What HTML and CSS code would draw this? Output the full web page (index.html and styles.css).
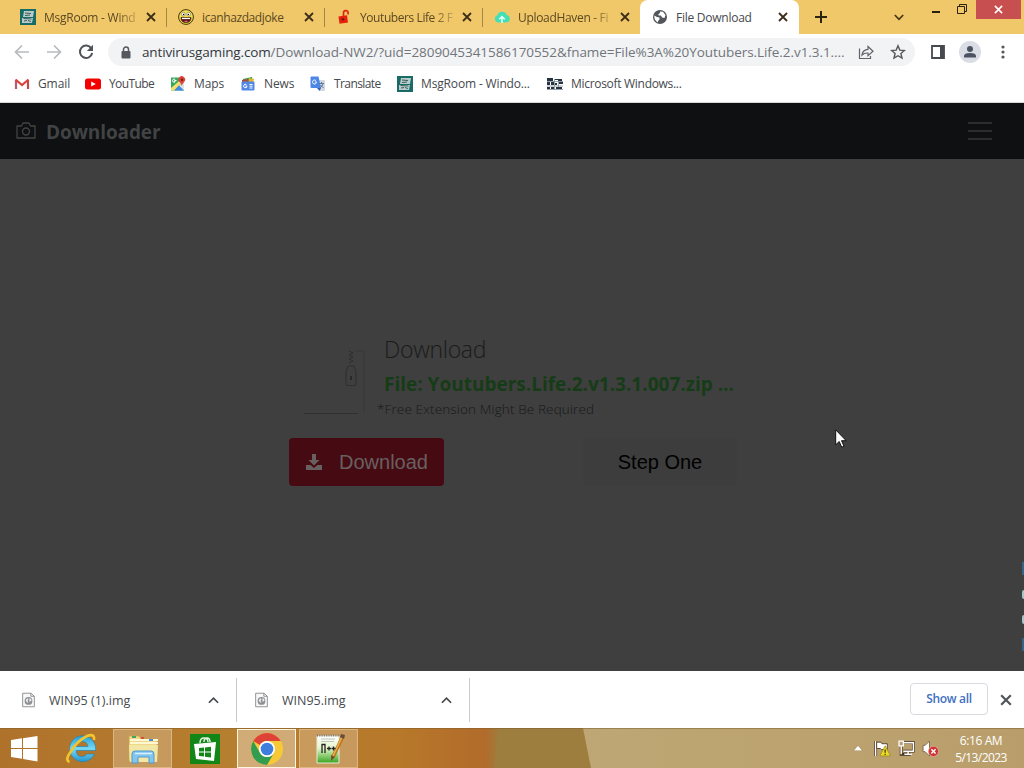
FILE: index.html
```html
<!DOCTYPE html>
<html lang="en">
<head>
  <meta charset="UTF-8">
  <meta name="viewport" content="width=device-width, initial-scale=1">
  <title>File Download</title>
  <link rel="stylesheet" href="styles.css">
</head>
<body>
  <svg class="defs" width="0" height="0">
    <symbol id="x" viewBox="0 0 10 10"><path d="M1 1l8 8M9 1L1 9" fill="none" stroke="currentColor" stroke-width="1.8"/></symbol>
    <symbol id="up" viewBox="0 0 12 8"><path d="M1 7l5-5 5 5" fill="none" stroke="currentColor" stroke-width="1.9"/></symbol>
    <symbol id="room" viewBox="0 0 16 16">
      <path fill="#176c68" d="M0 0h16v16H0z"/>
      <path fill="#b9cbc9" d="M4 2h10l-1 6H3zM2 9h11l-1 5H2z"/>
      <path d="M5 4l6 .5M5 6.500l5-.5M3.500 9.500l8 .5M4 12l3-.5M8 11.500l3 1" stroke="#3b5f60"/>
    </symbol>
    <symbol id="file" viewBox="0 0 14 16">
      <path d="M.7.7h9L13.300 4v11.300H.7z" fill="#f8f8f8" stroke="#8c8c90"/>
      <path d="M9.500.7V4h3.800" fill="none" stroke="#8c8c90"/>
      <circle cx="7" cy="9" r="4.200" fill="#8d8f94"/>
      <path d="M4 8l2-2 1 1-1 2 1 2-2-.500zM8 6l2 1v2l-2 1z" fill="#eee"/>
    </symbol>
  </svg>

  <div class="tabs">
    <div class="tab">
      <svg class="fav" viewBox="0 0 16 16"><use href="#room"/></svg>
      <span class="title fade">MsgRoom - Wind</span>
      <svg class="close"><use href="#x"/></svg>
    </div>
    <div class="tab">
      <svg class="fav" viewBox="0 0 16 16">
        <circle cx="8" cy="8" r="7.400" fill="#f6df45" stroke="#3d3312"/>
        <path d="M3 8.500h10q0 5-5 5t-5-5z" fill="#6b1020" stroke="#2c1c10" stroke-width=".7"/>
        <path d="M4 8.800h8v1.300H4z" fill="#fff"/>
        <path d="M6 12.200q2-1 4 0-2 1.500-4 0z" fill="#e58a96"/>
        <circle cx="5.300" cy="5.200" r="1.900" fill="#fff" stroke="#555" stroke-width=".5"/><circle cx="10.700" cy="5.200" r="1.900" fill="#fff" stroke="#555" stroke-width=".5"/>
        <circle cx="5.600" cy="5.500" r=".7"/><circle cx="10.400" cy="5.500" r=".7"/>
      </svg>
      <span class="title joke">icanhazdadjoke</span>
      <svg class="close"><use href="#x"/></svg>
    </div>
    <div class="tab">
      <svg class="fav" viewBox="0 0 16 16">
        <path d="M7.500 7V4.200a2.300 2.300 0 0 1 4.600-.4v1.700" fill="none" stroke="#df2912" stroke-width="1.700"/>
        <path d="M2.500 7.500L11 6.300l1 7.200-8.500 1.300z" fill="#e5200d"/>
        <circle cx="7" cy="10.300" r="1.300" fill="#75180b"/>
      </svg>
      <span class="title fade tube">Youtubers Life 2 F</span>
      <svg class="close"><use href="#x"/></svg>
    </div>
    <div class="tab last">
      <svg class="fav" viewBox="0 0 16 16">
        <path d="M4 13.500a3.700 3.700 0 0 1-.5-7.200A4.800 4.800 0 0 1 12.700 6a3.800 3.800 0 0 1-.2 7.500z" fill="#43dfb5"/>
        <path d="M8 14V8M5.300 10.300L8 7.600l2.700 2.700" fill="none" stroke="#e7fff5" stroke-width="1.600"/>
      </svg>
      <span class="title fade haven">UploadHaven - Fi</span>
      <svg class="close"><use href="#x"/></svg>
    </div>
    <div class="tab active">
      <svg class="fav globe" viewBox="0 0 16 16">
        <circle cx="8" cy="8" r="7" fill="#52565a"/>
        <path d="M2.300 6.500L5 8l2.500.5v2L6 12v1.500Q2 11.500 2.300 6.500zM8 2.500l3 .3L13.500 6l-1 3-2.500-.5L9 6.500H6.500V5L8 4z" fill="#fff"/>
      </svg>
      <span class="title">File Download</span>
      <svg class="close"><use href="#x"/></svg>
    </div>
    <svg class="plus" viewBox="0 0 12 12"><path d="M6 0v12M0 6h12" stroke="#2c2410" stroke-width="2"/></svg>
    <svg class="tab-search" viewBox="0 0 10 7"><path d="M.8 1L5 5.300 9.200 1" fill="none" stroke="#443718" stroke-width="1.700"/></svg>
    <div class="window-buttons">
      <svg class="min" viewBox="0 0 8 2"><path d="M0 0h8v2H0z" fill="#2a210f"/></svg>
      <svg class="max" viewBox="0 0 10 10"><path d="M.5 2.500h7v7h-7zM2.500 2.500v-2h7v7h-2" fill="none" stroke="#2a210f"/></svg>
      <div class="quit"><svg viewBox="0 0 10 10"><path d="M1 1l8 8M9 1L1 9" stroke="#fff" stroke-width="1.700"/></svg></div>
    </div>
  </div>

  <div class="toolbar">
    <svg class="nav" viewBox="0 0 16 16"><path d="M15 8H2M8 1.500L1.500 8 8 14.500" fill="none" stroke="#b9babd" stroke-width="1.700"/></svg>
    <svg class="nav" viewBox="0 0 16 16"><path d="M1 8h13M8 1.500L14.500 8 8 14.500" fill="none" stroke="#b9babd" stroke-width="1.700"/></svg>
    <svg class="nav" viewBox="0 0 16 16"><path d="M13.300 4.300A6.200 6.200 0 1 0 14.200 9" fill="none" stroke="#505357" stroke-width="2"/><path d="M15 .8v6.200H8.800z" fill="#505357"/></svg>
    <div class="omnibox">
      <svg class="lock" viewBox="0 0 10 13"><path d="M2.500 6V3.500a2.500 2.500 0 0 1 5 0V6" fill="none" stroke="#55585c" stroke-width="1.500"/><rect x=".5" y="5" width="9" height="7.500" rx="1" fill="#55585c"/></svg>
      <span class="url"><b>antivirusgaming.com</b>/Download-NW2/?uid=2809045341586170552&amp;fname=File%3A%20Youtubers.Life.2.v1.3.1....</span>
      <svg class="share" viewBox="0 0 16 16"><path d="M1.500 4.500v10h11v-2.500M4 11c.5-4 2.500-5.500 6-5.700V2.500l5 4.700-5 4.500V9Q6 8.800 4 11z" fill="none" stroke="#606368" stroke-width="1.200"/></svg>
      <svg class="star" viewBox="0 0 16 16"><path d="M8 1.800l1.800 4.300 4.600.4-3.500 3 1.100 4.600L8 11.700l-4 2.400 1.100-4.600-3.500-3 4.600-.4z" fill="none" stroke="#55585c" stroke-width="1.400"/></svg>
    </div>
    <svg class="panel" viewBox="0 0 14 14"><path d="M1 1h12v12H1z" fill="none" stroke="#46494d" stroke-width="1.800"/><path d="M9 1h4v12H9z" fill="#46494d"/></svg>
    <svg class="avatar" viewBox="0 0 22 22"><circle cx="11" cy="11" r="11" fill="#dadde5"/><circle cx="11" cy="8" r="3" fill="#4b5362"/><path d="M5 16.500V15q0-3 6-3t6 3v1.500z" fill="#4b5362"/></svg>
    <svg class="dots" viewBox="0 0 4 14"><g fill="#55585c"><circle cx="2" cy="2" r="1.600"/><circle cx="2" cy="7" r="1.600"/><circle cx="2" cy="12" r="1.600"/></g></svg>
  </div>

  <div class="bookmarks">
    <div class="bookmark gmail">
      <svg viewBox="0 0 16 16"><path d="M2 13V4" stroke="#b45b75" stroke-width="2.200"/><path d="M14 13V4" stroke="#c5474c" stroke-width="2.200"/><path d="M1.500 3.500L8 9l6.500-5.500" fill="none" stroke="#dc4239" stroke-width="2.200"/></svg>
      <span>Gmail</span>
    </div>
    <div class="bookmark youtube">
      <svg viewBox="0 0 16 16"><rect y="2.500" width="16" height="11" rx="2.500" fill="#f40000"/><path d="M6.200 5.500v5L10.800 8z" fill="#fff"/></svg>
      <span>YouTube</span>
    </div>
    <div class="bookmark maps">
      <svg viewBox="0 0 16 16"><path d="M1 1.500h13v13H1z" fill="#35a85a"/><path d="M1 12L12 2.500l2 2L4 14.500H1z" fill="#f6dc75"/><path d="M4.500 14.500L9 9.500l5 5z" fill="#4286e8"/><path d="M9 9.500l5-4v9z" fill="#dbe3e6"/><path d="M11.800 10q-.5-2.500-2.200-4A3.300 3.300 0 1 1 14.500 5.500q-2 2-2.700 4.500z" fill="#db4437"/><circle cx="12" cy="3.700" r="1.200" fill="#7d1e17"/><path d="M6.500 4.500H4.400v1.200h.9A1.600 1.600 0 1 1 5.200 3.500" fill="none" stroke="#fff"/></svg>
      <span>Maps</span>
    </div>
    <div class="bookmark news">
      <svg viewBox="0 0 16 16"><path d="M3 3l9-2 1 5H3z" fill="#3e9a4b"/><path d="M9 2l5 1-1 4H8z" fill="#e0b42f"/><path d="M2 4l6-1 1 3H2z" fill="#a3523d"/><rect x="1.500" y="5.500" width="13" height="9" rx="1" fill="#5287e6"/><path d="M7 10H5.500M7 10A1.700 1.700 0 1 1 6.500 8.800M9.500 8.500h3M9.500 10.200h3M9.500 12h3" fill="none" stroke="#fff"/></svg>
      <span>News</span>
    </div>
    <div class="bookmark translate">
      <svg viewBox="0 0 16 16"><path d="M6 4h8q1 0 1 1v9q0 1-1 1h-4z" fill="#d4d7df"/><path d="M1.500.5h7L11 12H1.500q-1 0-1-1v-9.500q0-1 1-1z" fill="#4c87e8"/><path d="M6.500 6H4.800m1.700 0A2 2 0 1 1 6 4.700" fill="none" stroke="#fff"/><path d="M9 7.500h5M11.500 6v1.500M13 7.500q-.7 3-3 4.500M10.500 9l3 3" fill="none" stroke="#5b789d"/><path d="M7 12h4l-1.500 3z" fill="#3160b5"/></svg>
      <span>Translate</span>
    </div>
    <div class="bookmark room">
      <svg viewBox="0 0 16 16"><use href="#room"/></svg>
      <span>MsgRoom - Windo...</span>
    </div>
    <div class="bookmark microsoft">
      <svg viewBox="0 0 16 16"><path fill="#26323f" d="M0 2h6v3H0zM0 6h3v3H0zM4 6h3v3H4zM0 11h3v2H0zM4 11h3v2H4zM8 3h3v1H8zM11 3h4v2h-4zM8 7h2v2H8zM12 6h4v2h-4zM9 11h6v2H9z"/><path d="M7.500 3v11M0 5.500h16M0 10h16M11.500 5v6M0 13.500h16" stroke="#7d8d98" stroke-width=".8"/></svg>
      <span>Microsoft Windows...</span>
    </div>
  </div>

  <div class="page">
    <div class="navbar">
      <svg class="camera" viewBox="0 0 20 18"><path d="M1 4h4.500L7 1h6l1.500 3H19v12H1z" fill="none" stroke="#414345" stroke-width="1.300" stroke-linejoin="round"/><circle cx="10" cy="9.500" r="3.500" fill="none" stroke="#414345" stroke-width="1.400"/></svg>
      <span class="brand">Downloader</span>
      <div class="burger"><i></i><i></i><i></i></div>
    </div>
    <div class="content">
      <div class="card">
        <div class="info">
          <svg class="zip" viewBox="0 0 66 82"><path d="M2 79.500h54" stroke="#303030"/><path d="M62 79V17h-9" fill="none" stroke="#393939"/><path d="M47 17l4 2-4 2 4 2-4 2 4 2-4 2M44 50V38l2-6h6l2 6v12q0 1.500-2 1.500h-6q-2 0-2-1.500z" fill="none" stroke="#2e2e2e"/><path d="M49 42v4" stroke="#292929" stroke-width="2"/></svg>
          <div class="texts">
            <h1>Download</h1>
            <h2>File: Youtubers.Life.2.v1.3.1.007.zip ...</h2>
            <p>*Free Extension Might Be Required</p>
          </div>
        </div>
        <div class="actions">
          <button class="download">
            <svg viewBox="0 0 16 16"><path d="M6 0h4v6h3.500L8 11.500 2.500 6H6z" fill="#686060"/><path d="M0 11h4.500L8 14l3.500-3H16v5H0z" fill="#686060"/></svg>
            <span>Download</span>
          </button>
          <button class="step">Step One</button>
        </div>
      </div>
    </div>
    <div class="watermark"><i class="bar"></i><i class="dot"></i><i class="dot"></i><i class="bar"></i></div>
  </div>

  <div class="shelf">
    <div class="item">
      <svg class="file"><use href="#file"/></svg>
      <span class="first">WIN95 (1).img</span>
      <svg class="up"><use href="#up"/></svg>
    </div>
    <div class="item">
      <svg class="file"><use href="#file"/></svg>
      <span>WIN95.img</span>
      <svg class="up"><use href="#up"/></svg>
    </div>
    <button class="show-all">Show all</button>
    <svg class="shelf-close"><use href="#x"/></svg>
  </div>

  <div class="taskbar">
    <svg class="wallpaper" viewBox="0 0 1024 40" preserveAspectRatio="none">
      <defs>
        <linearGradient id="wood"><stop offset="0" stop-color="#af722b"/><stop offset=".5" stop-color="#b78030"/><stop offset=".8" stop-color="#b7782a"/><stop offset=".97" stop-color="#b26b2b"/><stop offset="1" stop-color="#9e7e3e"/></linearGradient>
        <linearGradient id="sand"><stop offset="0" stop-color="#bea774"/><stop offset="1" stop-color="#b99e6b"/></linearGradient>
      </defs>
      <path d="M0 0h500l-4 40H0z" fill="url(#wood)"/>
      <path d="M498 0h86l8 40H494z" fill="#9e7e3e"/>
      <path d="M583 0h441v40H591z" fill="url(#sand)"/>
      <path d="M0 .5h1024" stroke="#7b5b2c" stroke-opacity=".5"/>
    </svg>
    <div class="task start"><svg viewBox="0 0 28 28"><path d="M1 5l11-1.700V13H1zM13 3.200L27.500 1v12H13zM1 14h11v9.700L1 22zM13 14h14.500v12.500L13 24z" fill="#fff"/></svg></div>
    <div class="task ie">
      <svg viewBox="0 0 32 32">
        <defs><linearGradient id="ieg" x2="0" y2="1"><stop stop-color="#239ed4"/><stop offset=".5" stop-color="#77daf3"/><stop offset="1" stop-color="#2495cc"/></linearGradient></defs>
        <path d="M29.500 21A13 13 0 1 1 30.500 17.500H11q.5 6 6 6 3.500 0 4.500-2.500zM11 13.500h12q-.5-5-6-5t-6 5z" fill="url(#ieg)" stroke="#2180b5" stroke-width=".6" fill-rule="evenodd"/>
        <path d="M4.500 29q-5-2 1-10Q12 8 22 3q8-3 7 4" fill="none" stroke="#f2c52e" stroke-width="2.600"/>
      </svg>
    </div>
    <div class="task open explorer">
      <svg viewBox="0 0 32 32"><path d="M2 3h10l2 3h16v22H2z" fill="#efd889" stroke="#c9a752" stroke-width=".7"/><path d="M3 7h28M3 10h28" stroke="#fff8d3" stroke-width="2"/><path d="M5 4h4" stroke="#42a65b" stroke-width="2"/><path d="M14 5h3" stroke="#d9503a" stroke-width="2"/><path d="M22 7h4" stroke="#4a8ed2" stroke-width="2"/><path d="M2 12h29l-1 17H3z" fill="#f3e7a5"/><path d="M5 30V21q0-3 3-3h16q3 0 3 3v9h-5v-6H11v6z" fill="#83c5ed" stroke="#5099cf"/><path d="M8 20.500h17" stroke="#d6f1fc" stroke-width="1.500"/></svg>
    </div>
    <div class="task store">
      <svg viewBox="0 0 30 30"><path d="M0 0h30v30H0z" fill="#138618"/><path d="M4 10l22-2-2 19-18-2z" fill="#fff"/><path d="M10 9q0-5 4-5t4 4M14 8q0-4 3-4t3 4" fill="none" stroke="#e9f6e8" stroke-width="1.400"/><path d="M9 14l5-.5v4H9zM15 13.400l6-.6v4.700h-6zM9 18.500h5v4l-5-.6zM15 18.500h6v5l-6-.7z" fill="#138618"/></svg>
    </div>
    <div class="task open chrome">
      <svg viewBox="0 0 32 32"><circle cx="16" cy="16" r="16" fill="#f7c936"/><path d="M2.200 8A16 16 0 0 1 29.800 8H16a8 8 0 0 0-7 4z" fill="#df4236"/><path d="M2.200 8A16 16 0 0 0 16 32l7-12a8 8 0 0 1-13.900 0z" fill="#329c50"/><circle cx="16" cy="16" r="8" fill="#fff"/><circle cx="16" cy="16" r="6.300" fill="#3f7edc"/></svg>
    </div>
    <div class="task open notepad">
      <svg viewBox="0 0 32 32"><defs><linearGradient id="np" x2="0" y2="1"><stop stop-color="#fff"/><stop offset=".45" stop-color="#e3f5c9"/><stop offset="1" stop-color="#37a51e"/></linearGradient></defs><path d="M4 3h22v27H4z" fill="url(#np)" stroke="#e5eadc"/><path d="M4 2.500h22" stroke="#777" stroke-width="2" stroke-dasharray="1 1.300"/><path d="M8 6h14M8 8.500h13" stroke="#bdc4bb"/><path d="M30 3L20 24" stroke="#b87421" stroke-width="3.600"/><path d="M29 4L20 23" stroke="#ecad48" stroke-width="1.700"/><path d="M18 22l4 2-4 4z" fill="#705130"/><path d="M28 1l4 1-1 4-4-2z" fill="#6b4a3c"/><path d="M9 20v-8.500h3V20M14 15.500h4M16 13.500v4M18.500 15.500h4M20.500 13.500v4" fill="none" stroke="#222" stroke-width="1.300"/></svg>
    </div>
    <div class="tray">
      <svg class="more" viewBox="0 0 10 6"><path d="M.5 5.700L5 .5l4.500 5.200z" fill="#fff" stroke="#8a7252" stroke-width=".4"/></svg>
      <svg class="tray-icon" viewBox="0 0 16 16"><path d="M1.500 1v14" stroke="#4a3520" stroke-width="2.800"/><path d="M1.500 1v14" stroke="#fff" stroke-width="1.400"/><path d="M2.500 2h4l1 1.500h5V9H7L6 8H2.500z" fill="#fff" stroke="#4a3520" stroke-width=".8"/><path d="M10.500 5.500L15.500 15h-10z" fill="#eddc24" stroke="#9b871c" stroke-width=".7"/><path d="M10.500 9v3M10.500 13v1" stroke="#423a10" stroke-width="1.200"/></svg>
      <svg class="tray-icon" viewBox="0 0 16 16"><g fill="none" stroke="#4a3520" stroke-width="2.700"><path d="M5 2.500h9.500v8H5M3 5v8.500h9M9.500 10v3"/></g><path d="M5 2.500h9.500v8H5" fill="none" stroke="#fff" stroke-width="1.400"/><path d="M3 5v8.500M6 13.500h7M9.500 10.500v3" fill="none" stroke="#fff" stroke-width="1.400"/><path d="M1 1h4v4.500H1z" fill="#b69c70" stroke="#fff" stroke-width="1.200"/></svg>
      <svg class="tray-icon" viewBox="0 0 16 16"><path d="M1 5h2l4-4v14l-4-4H1z" fill="#fff" stroke="#725c43" stroke-width=".8"/><circle cx="10.800" cy="10.700" r="4.800" fill="#cd3533" stroke="#ecaaa0" stroke-width=".7"/><path d="M8.800 8.700l4 4M12.800 8.700l-4 4" stroke="#fff" stroke-width="1.400"/></svg>
      <div class="clock"><span class="time">6:16 AM</span><span>5/13/2023</span></div>
    </div>
  </div>

  <svg class="cursor" viewBox="0 0 12 19"><path d="M.7.8v15l3.500-3.300 2.500 5.700 2.300-1-2.500-5.500h4.700z" fill="#fff" stroke="#111"/></svg>
</body>
</html>
```
FILE: styles.css
```css
* {
  box-sizing: border-box;
}

body {
  margin: 0;
  width: 1024px;
  height: 768px;
  overflow: hidden;
  position: relative;
  display: flex;
  flex-direction: column;
  font-family: "Open Sans", "Noto Sans", sans-serif;
  font-size: 12px;
  color: #46494d;
  background: #fff;
}

svg {
  display: block;
  flex: none;
}

span, h1, h2, p {
  white-space: nowrap;
}

button {
  font-family: inherit;
  border: none;
  padding: 0;
}

.defs {
  position: absolute;
}

/* tab strip */
.tabs {
  height: 34px;
  flex: none;
  display: flex;
  align-items: center;
  padding-left: 8px;
  background: #f0c869;
}

.tab {
  width: 158px;
  height: 34px;
  display: flex;
  align-items: center;
  padding: 0 10px 0 12px;
  color: #5c4923;
}

.tab + .tab {
  background: linear-gradient(#a38546, #a38546) left center / 1px 19px no-repeat;
}

.tab + .tab.active {
  width: 159px;
  background: #fff;
  border-radius: 8px 8px 0 0;
  color: #46494d;
}

.fav {
  width: 16px;
  height: 16px;
  margin-right: 8px;
}

.title {
  width: 94px;
  letter-spacing: -0.25px;
}

.title.joke {
  letter-spacing: -0.4px;
}

.title.tube {
  letter-spacing: -0.42px;
}

.title.haven {
  letter-spacing: -0.32px;
}

.fade {
  -webkit-mask-image: linear-gradient(90deg, #000 78%, rgba(0, 0, 0, 0.2));
  mask-image: linear-gradient(90deg, #000 78%, rgba(0, 0, 0, 0.2));
}

.close {
  width: 10px;
  height: 10px;
  margin-left: 8px;
  color: #3b2d17;
}

.plus {
  width: 12px;
  height: 12px;
  margin-left: 16px;
}

.tab-search {
  width: 10px;
  height: 7px;
  margin-left: 67px;
}

.window-buttons {
  height: 34px;
  display: flex;
  align-items: flex-start;
  margin-left: 28px;
}

.min {
  width: 8px;
  height: 2px;
  margin-top: 11px;
}

.max {
  width: 10px;
  height: 10px;
  margin: 4px 9px 0 17px;
}

.quit {
  width: 45px;
  height: 19px;
  display: flex;
  align-items: center;
  justify-content: center;
  background: #c84f50;
}

.quit svg {
  width: 9px;
  height: 9px;
}

/* toolbar */
.toolbar {
  height: 36px;
  flex: none;
  display: flex;
  align-items: center;
  padding-left: 14px;
}

.nav {
  width: 16px;
  height: 16px;
  margin-right: 16px;
}

.omnibox {
  width: 807px;
  height: 28px;
  margin-left: -2px;
  display: flex;
  align-items: center;
  padding-left: 13px;
  border-radius: 14px;
  background: #f1f3f5;
}

.lock {
  width: 10px;
  height: 13px;
}

.url {
  width: 704px;
  margin-left: 11px;
  font-size: 13.5px;
  letter-spacing: -0.06px;
  color: #72757a;
}

.url b {
  font-weight: 400;
  letter-spacing: -0.15px;
  color: #35383c;
}

.share {
  width: 16px;
  height: 16px;
  margin-left: 12px;
}

.star {
  width: 16px;
  height: 16px;
  margin-left: 16px;
}

.panel {
  width: 14px;
  height: 14px;
  margin-left: 16px;
}

.avatar {
  width: 22px;
  height: 22px;
  margin-left: 14px;
}

.dots {
  width: 4px;
  height: 14px;
  margin-left: 20px;
}

/* bookmarks bar */
.bookmarks {
  height: 33px;
  flex: none;
  display: flex;
  padding: 0 0 5px 14px;
  border-bottom: 1px solid #d7d7d9;
}

.bookmark {
  display: flex;
  align-items: center;
  gap: 8px;
  letter-spacing: -0.1px;
}

.bookmark svg {
  width: 16px;
  height: 16px;
}

.gmail { width: 71px; }
.youtube { width: 85px; letter-spacing: -0.6px; }
.maps { width: 70px; }
.news { width: 70px; }
.translate { width: 87px; letter-spacing: -0.6px; }
.room { width: 150px; letter-spacing: -0.15px; }
.microsoft { letter-spacing: -0.3px; }

.page {
  height: 568px;
  flex: none;
  position: relative;
  display: flex;
  flex-direction: column;
  background: #3f3f3f;
}

.navbar {
  height: 56px;
  flex: none;
  display: flex;
  align-items: center;
  padding: 0 32px 0 16px;
  background: #0e1011;
}

.camera {
  width: 20px;
  height: 18px;
}

.brand {
  margin-left: 10px;
  padding-top: 2px;
  font-size: 19px;
  font-weight: 700;
  letter-spacing: -0.1px;
  color: #414345;
}

.burger {
  width: 24px;
  margin-left: auto;
  display: flex;
  flex-direction: column;
  gap: 6px;
}

.burger i {
  height: 2px;
  background: #2c2d2e;
}

.content {
  padding: 175px 0 0 289px;
}

.card {
  width: 448px;
}

.info {
  display: flex;
  height: 104px;
}

.zip {
  width: 66px;
  height: 82px;
  margin-left: 13px;
}

.texts {
  padding-left: 16px;
}

h1 {
  margin: 0;
  font-size: 23px;
  line-height: 30px;
  font-weight: 300;
  letter-spacing: -0.3px;
  color: #1b1b1b;
}

h2 {
  margin: 8px 0 0;
  font-size: 19px;
  line-height: 24px;
  font-weight: 700;
  color: #163c17;
}

p {
  margin: 4px 0 0 -7px;
  font-size: 13.5px;
  line-height: 18px;
  font-weight: 300;
  letter-spacing: 0.13px;
  color: #181818;
}

.actions {
  display: flex;
  justify-content: space-between;
}

.download {
  width: 155px;
  height: 48px;
  display: flex;
  align-items: center;
  padding-left: 17px;
  border-radius: 4px;
  background: #460a12;
  font-family: "Liberation Sans", Arial, sans-serif;
  font-size: 20px;
  color: #686060;
}

.download svg {
  width: 16px;
  height: 16px;
  margin-right: 17px;
}

.step {
  width: 154px;
  height: 48px;
  border-radius: 4px;
  background: #3d3d3d;
  font-family: "Liberation Sans", Arial, sans-serif;
  font-size: 20px;
  color: #000;
}

.watermark {
  position: absolute;
  right: 0;
  top: 459px;
  width: 2px;
  display: flex;
  flex-direction: column;
  gap: 13px;
}

.watermark i {
  height: 13px;
  background: #356487;
}

.watermark .dot {
  height: 9px;
  margin-top: 2px;
  margin-bottom: 1px;
  border-radius: 4px 0 0 4px;
  background: #a5c5c8;
}

/* downloads shelf */
.shelf {
  height: 57px;
  flex: none;
  display: flex;
  align-items: center;
  background: #fff;
}

.item {
  height: 44px;
  width: 237px;
  display: flex;
  align-items: center;
  padding: 0 17px 0 22px;
  border-right: 1px solid #c9cacc;
}

.item + .item {
  width: 233px;
  padding-left: 18px;
}

.file {
  width: 13px;
  height: 16px;
}

.item span {
  margin-left: 14px;
  padding-top: 2px;
  font-size: 12.5px;
}

.up {
  width: 11px;
  height: 8px;
  margin-left: auto;
}

.show-all {
  width: 78px;
  height: 32px;
  margin: 0 12px 2px auto;
  border: 1px solid #d8dae0;
  border-radius: 4px;
  background: #fff;
  font-size: 12px;
  font-weight: 600;
  letter-spacing: -0.3px;
  color: #426fc2;
}

.shelf-close {
  width: 12px;
  height: 12px;
  margin-right: 12px;
  color: #505357;
}

/* taskbar */
.taskbar {
  height: 40px;
  flex: none;
  position: relative;
  display: flex;
  align-items: flex-end;
}

.wallpaper {
  position: absolute;
  inset: 0;
  width: 1024px;
  height: 40px;
  z-index: -1;
}

.task {
  width: 59px;
  height: 39px;
  margin-right: 3px;
  display: flex;
  align-items: center;
  justify-content: center;
}

.task svg {
  width: 32px;
  height: 32px;
}

.start {
  width: 48px;
}

.task.start svg {
  width: 28px;
  height: 28px;
}

.task.store svg {
  width: 30px;
  height: 30px;
}

.open {
  border: 1px solid #dcb580;
  background: rgba(225, 200, 165, 0.4);
}

.chrome {
  border-color: #fff4df;
  background: rgba(235, 215, 190, 0.5);
}

.tray {
  height: 40px;
  margin-left: auto;
  padding-right: 16px;
  display: flex;
  align-items: center;
}

.more {
  width: 10px;
  height: 6px;
  margin-right: 11px;
}

.tray-icon {
  width: 17px;
  height: 17px;
  margin-right: 7px;
}

.clock {
  width: 54px;
  margin-left: 8px;
  display: flex;
  flex-direction: column;
  align-items: center;
  line-height: 17px;
  padding-top: 2px;
  font-size: 12px;
  letter-spacing: -0.6px;
  color: #fff;
}

.time {
  letter-spacing: -0.4px;
}

.cursor {
  position: absolute;
  left: 835px;
  top: 429px;
  width: 12px;
  height: 19px;
}
```
